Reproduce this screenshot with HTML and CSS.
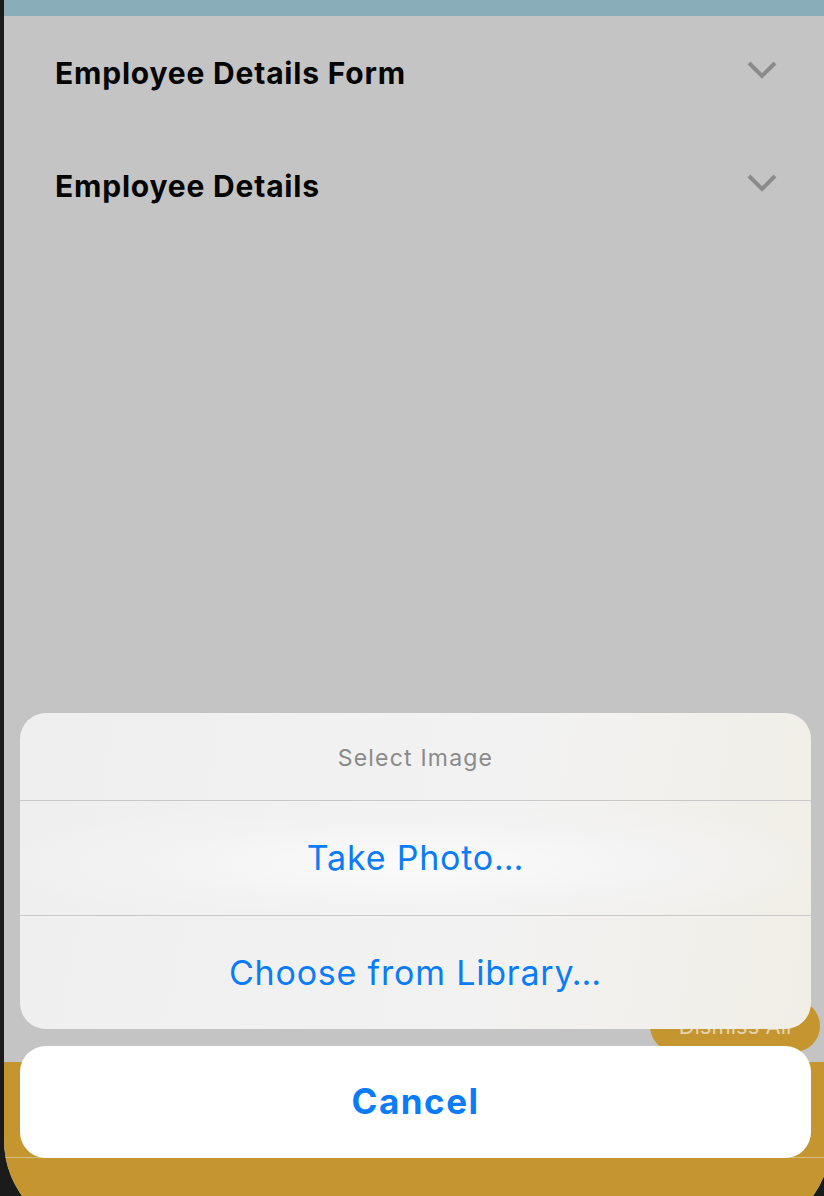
FILE: index.html
```html
<!DOCTYPE html>
<html lang="en">
<head>
	<meta charset="UTF-8">
	<title>Employee Details</title>
	<link rel="stylesheet" href="styles.css">
</head>
<body>
<div class="screen">
	<div class="topbar"></div>
	<div class="content">
		<div class="row">
			<span class="row-title">Employee Details Form</span>
			<svg class="chev" width="32" height="20" viewBox="0 0 32 20"><path d="M3 3 L16 16 L29 3" fill="none" stroke="#8b8b8b" stroke-width="4"/></svg>
		</div>
		<div class="row">
			<span class="row-title">Employee Details</span>
			<svg class="chev" width="32" height="20" viewBox="0 0 32 20"><path d="M3 3 L16 16 L29 3" fill="none" stroke="#8b8b8b" stroke-width="4"/></svg>
		</div>
	</div>
	<div class="dismiss">Dismiss All</div>
	<div class="footer">
		<div class="footer-line"></div>
	</div>

	<!-- action sheet -->
	<div class="sheet">
		<div class="group">
			<div class="sheet-title">Select Image</div>
			<div class="sheet-btn photo">Take Photo…</div>
			<div class="sheet-btn">Choose from Library…</div>
		</div>
		<div class="cancel">Cancel</div>
	</div>
</div>
</body>
</html>
```

FILE: styles.css
```css
html,body{margin:0;padding:0;background:#1b1b1b;overflow:hidden;height:1196px}
body{font-family:"Inter","Liberation Sans",sans-serif}

.screen{
  position: relative;
  margin-left: 4px;
  width: 827px;
  height: 1236px;
  display: flex;
  flex-direction: column;
  background: #c4c4c4;
  border-radius: 0 0 96px 96px;
  overflow: hidden;
}
.topbar{height: 16px;background: #8aaeb9;flex: none}
.content{flex: 1;display: flex;flex-direction: column}
.row{
  height: 113px;
  display: flex;
  align-items: center;
  justify-content: space-between;
  padding: 0 53px 0 51px;
}
.row-title{font-size: 30px;font-weight: 700;color: #050505;letter-spacing: 0.8px}
.chev{margin-top: -6px}

.footer{height: 174px;background: #c5962f;flex: none}
.footer-line{margin-top: 95px;height: 1px;background: #d6bc86}

.dismiss{
  position: absolute;
  left: 646px;
  top: 1000px;
  width: 170px;
  height: 52px;
  border-radius: 26px;
  background: #c5962f;
  color: #e2d3b0;
  font-size: 22px;
  line-height: 52px;
  text-align: center;
}

.sheet{
  position: absolute;
  left: 16px;
  top: 713px;
  width: 791px;
  display: flex;
  flex-direction: column;
  gap: 17px;
}
.group{
  border-radius: 26px;
  overflow: hidden;
  background: linear-gradient(100deg,#efefef 0%,#f2f2f2 60%,#f1eee6 100%);
}
.sheet-title{
  height: 87px;
  line-height: 90px;
  text-align: center;
  font-size: 23px;
  letter-spacing: 1.2px;
  color: #8a8a8a;
  border-bottom: 1px solid #c9c9c9;
}
.sheet-btn{
  height: 113px;
  line-height: 113px;
  text-align: center;
  font-size: 34px;
  letter-spacing: 0.8px;
  color: #0a7cf8;
}
.sheet-btn.photo{
  height: 114px;
  border-bottom: 1px solid #c9c9c9;
  background: radial-gradient(ellipse at 50% 55%,#fbfbfb 0%,#f3f3f3 45%,rgba(240,240,240,0) 75%);
}
.cancel{
  height: 112px;
  line-height: 110px;
  border-radius: 26px;
  background: #fff;
  text-align: center;
  font-size: 35px;
  font-weight: 700;
  letter-spacing: 1.5px;
  color: #0a7cf8;
}
```
